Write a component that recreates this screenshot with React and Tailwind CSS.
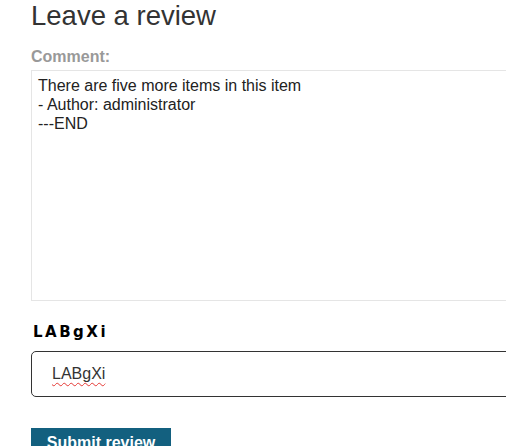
import React from 'react';

export default function App() {
  return (
    <div className="w-[506px] h-[446px] overflow-hidden bg-white font-['Liberation_Sans',Arial,sans-serif] text-[#333]">
      <div className="pl-[31px] w-[620px]">
        <h2 className="text-[27.5px] leading-[31px] font-normal text-[#333]">Leave a review</h2>

        <form className="mt-[17px]" onSubmit={e => e.preventDefault()}>
          <label className="block text-[16px] leading-[18px] font-bold text-[#999]">Comment:</label>
          <textarea
            className="mt-[4px] block w-[560px] h-[231px] border border-[#e5e5e5] px-[6px] pt-[5px] pb-[4px] text-[16px] leading-[19px] text-[#222] resize-none outline-none font-['Liberation_Sans',Arial,sans-serif]"
            defaultValue={'There are five more items in this item\n- Author: administrator\n---END'}
          />

          <div className="mt-[22px] pl-[2px] text-[15px] leading-[18px] font-bold tracking-[2.5px] text-black font-['DejaVu_Sans',sans-serif]">
            LABgXi
          </div>

          <div className="mt-[10px] w-[560px] h-[46px] border-[1.5px] border-[#333] rounded-[5px] flex items-center pl-[20px] text-[16px] text-[#333]">
            <span className="underline decoration-wavy decoration-[#e53935] decoration-1 underline-offset-[3px]">LABgXi</span>
          </div>

          <button
            type="submit"
            className="mt-[31px] w-[140px] h-[34px] bg-[#13607f] text-white text-[16px] font-bold flex justify-center pt-[3px]"
          >
            Submit review
          </button>
        </form>
      </div>
    </div>
  );
}
